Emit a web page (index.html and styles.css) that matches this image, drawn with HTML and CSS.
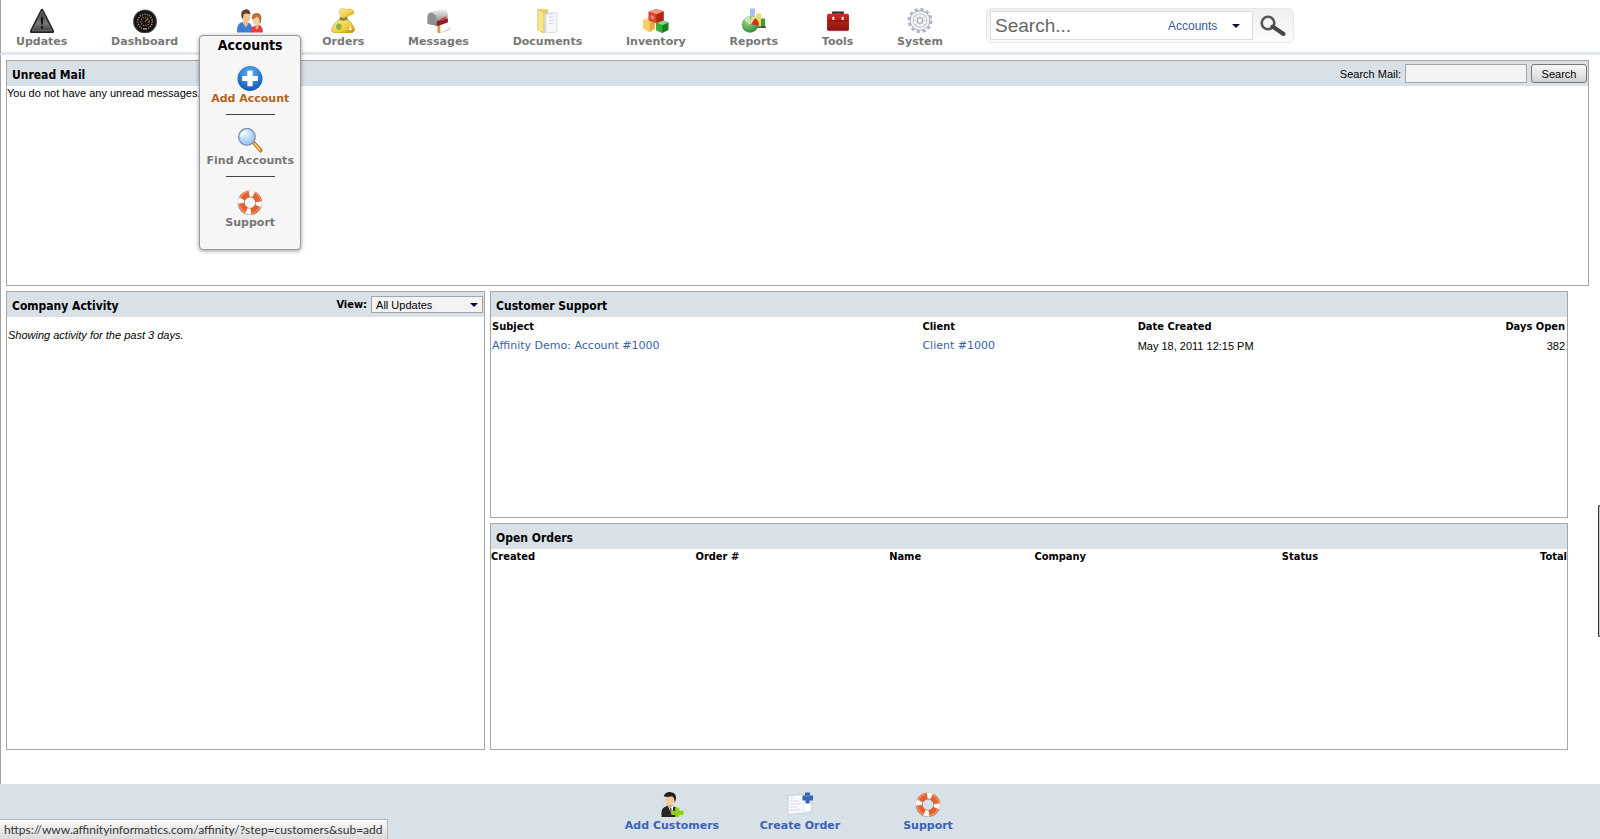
FILE: index.html
```html
<!DOCTYPE html>
<html lang="en">
<head>
    <meta charset="UTF-8">
    <meta name="viewport" content="width=device-width, initial-scale=1.0">
    <title>Affinity - Dashboard</title>
    <link rel="stylesheet" href="styles.css">
</head>
<body>
    <!-- shared icon parts -->
    <svg class="defs" width="0" height="0" aria-hidden="true">
        <defs>
            <linearGradient id="g-dark" x1="0" y1="0" x2="0" y2="1"><stop offset="0" stop-color="#333"/><stop offset=".6" stop-color="#777"/><stop offset="1" stop-color="#444"/></linearGradient>
            <linearGradient id="g-gold" x1="0" y1="0" x2="1" y2="1"><stop offset="0" stop-color="#fbeeb0"/><stop offset=".6" stop-color="#f0cf3c"/><stop offset="1" stop-color="#b98a14"/></linearGradient>
            <linearGradient id="g-steel" x1="0" y1="0" x2="0" y2="1"><stop offset="0" stop-color="#f4f4f4"/><stop offset="1" stop-color="#6c6e72"/></linearGradient>
            <radialGradient id="g-blue" cx=".5" cy=".3" r=".7"><stop offset="0" stop-color="#5fb4f6"/><stop offset="1" stop-color="#1056b4"/></radialGradient>
            <radialGradient id="g-green" cx=".4" cy=".3" r=".8"><stop offset="0" stop-color="#a5dc98"/><stop offset="1" stop-color="#27812c"/></radialGradient>
            <radialGradient id="g-glass" cx=".4" cy=".3" r=".8"><stop offset="0" stop-color="#e8f5ff"/><stop offset="1" stop-color="#86bdf2"/></radialGradient>
            <linearGradient id="g-red" x1="0" y1="0" x2="0" y2="1"><stop offset="0" stop-color="#cf2b22"/><stop offset="1" stop-color="#8d0f0f"/></linearGradient>
        </defs>
        <symbol id="i-support" viewBox="0 0 24 24">
            <circle cx="12" cy="12.5" r="8.5" fill="none" stroke="#8c8c8c" stroke-width="6.6" opacity=".6"/>
            <circle cx="12" cy="12" r="8.5" fill="none" stroke="#e8602c" stroke-width="6"/>
            <circle cx="12" cy="12" r="8.5" fill="none" stroke="#fff" stroke-width="6" stroke-dasharray="4.4 8.95" stroke-dashoffset="1"/>
            <circle cx="12" cy="12" r="10.5" fill="none" stroke="#fff" stroke-width="1" opacity=".35"/>
            <circle cx="12" cy="12" r="5.6" fill="none" stroke="#a34a2c" stroke-width=".6" opacity=".7"/>
        </symbol>
    </svg>

    <header class="topbar">
        <nav class="nav">
            <a href="#">
                <svg viewBox="0 0 24 24"><path d="M12 .8Q12.900.8 13.4 1.8L23.4 21.5Q24 24 22 24H2Q0 24 .6 21.5L10.6 1.8Q11.100.8 12 .8Z" fill="#222"/><path d="M12 3L21.500 22H2.500Z" fill="url(#g-dark)" stroke="#888" stroke-width=".6"/><path d="M10.800 9h2.400l-.5 7h-1.400zM11 17.500h2v2.200h-2z" fill="#111"/></svg>
                <span>Updates</span>
            </a>
            <a href="#">
                <svg viewBox="0 0 24 24"><circle cx="12" cy="13" r="11.5" fill="#555"/><circle cx="12" cy="13" r="10.6" fill="#151515"/><circle cx="12" cy="13" r="7" fill="none" stroke="#a8977c" stroke-width="1.6" stroke-dasharray="1 1.3"/><circle cx="12" cy="13" r="4" fill="none" stroke="#93602f" stroke-width="1.4" stroke-dasharray="1.3 1"/><path d="M12 13l3-3" stroke="#b5653a"/><path d="M9.500 18h5v2.500h-5z" fill="#000"/><path d="M10 20h4" stroke="#ccc"/></svg>
                <span>Dashboard</span>
            </a>
            <div class="nav-group">
                <a href="#">
                    <svg viewBox="0 0 26 24"><path d="M0 24Q0 15 4 14L8 13 13 15Q16 18 15 24Z" fill="#3a7fd8"/><path d="M14 24Q13 19 16 18L21 16Q26 17 26 24Z" fill="#e3403c"/><path d="M6 13h5v3l-2 3-3-4z" fill="#eab98a"/><ellipse cx="9" cy="8.5" rx="4.2" ry="5.5" fill="#efc499"/><path d="M4.500 9Q3 2 8 1Q13 0 13.500 6Q9 4 6.500 6L6 10Z" fill="#5d4027"/><path d="M18 16h4l-1 4-2 1z" fill="#eab98a"/><ellipse cx="19.5" cy="11.5" rx="3.9" ry="5" fill="#f3cda4"/><path d="M15 11Q14 5 19 4.500Q24.500 4 24.500 10Q24.500 14 22.500 16Q23 10 20 8Q18 10 15 11Z" fill="#b5773a"/></svg>
                    <span>Accounts</span>
                </a>
                <div class="menu">
                    <h2>Accounts</h2>
                    <a href="#" class="active">
                        <svg viewBox="0 0 24 24"><circle cx="12" cy="12" r="12" fill="url(#g-blue)"/><path d="M9.500 4.500h5v5h5v5h-5v5h-5v-5h-5v-5h5z" fill="#fff"/></svg>
                        <span>Add Account</span>
                    </a>
                    <hr>
                    <a href="#">
                        <svg viewBox="0 0 24 24"><path d="M14.500 15l2-2 7 7.500q.5 2-1.500 3z" fill="#e99a2c" stroke="#a2601c" stroke-width=".8"/><path d="M16.500 15l5 6" stroke="#ffdf8c"/><circle cx="9" cy="8.5" r="8" fill="url(#g-glass)" stroke="#8295ae" stroke-width="1.3"/><path d="M3.500 9Q4 3.500 9.500 3" fill="none" stroke="#fff" stroke-width="1.3"/></svg>
                        <span>Find Accounts</span>
                    </a>
                    <hr>
                    <a href="#">
                        <svg><use href="#i-support"/></svg>
                        <span>Support</span>
                    </a>
                </div>
            </div>
            <a href="#">
                <svg viewBox="0 0 24 24"><path d="M9.500 7Q7 3 9.500 1Q13-.5 15 1.500Q19-.5 22 2.500Q24 6 19 7L15 9H10Z" fill="url(#g-gold)" stroke="#d9c069" stroke-width=".6"/><path d="M9 11Q2 15 1 22Q2 24 6 24H19Q24 23 23 20Q20 13 16 10.500Z" fill="url(#g-gold)" stroke="#c09a2c" stroke-width=".7"/><path d="M9 8.500q3 2 7 0l.5 2.500q-4 2-8 .5z" fill="#8a8632"/><ellipse cx="8" cy="18" rx="2.7" ry="3.2" fill="#8fb544"/><path d="M19 16l1.500 5h-3z" fill="#fff5bf"/></svg>
                <span>Orders</span>
            </a>
            <a href="#">
                <svg viewBox="0 0 24 24"><path d="M12 24L23 18.500V21L14 24Z" fill="#ddd"/><path d="M10.500 14h2.800v10h-2.800z" fill="#d99b52"/><path d="M1 8Q1 4 5 3L16 1Q20.500 1 20.500 6V12L10 17 1 15Z" fill="url(#g-steel)"/><path d="M1 8Q2 4 5 4.500Q9 5.500 9.500 10V17L1 15Z" fill="#8d8f93"/><path d="M10 12.500l10.500-2.500v4L10 17.500z" fill="#8d2129"/><path d="M13 10.500l6-2.500v2l-5 2.500z" fill="#d5424a"/></svg>
                <span>Messages</span>
            </a>
            <a href="#">
                <svg viewBox="0 0 24 24"><path d="M4 1H13V22L8 24 4 21Z" fill="#e5d36a"/><path d="M9 5L19 5V23H9Z" fill="#e4e6ea" stroke="#bbb" stroke-width=".5"/><path d="M11 6L21.500 4.500V23L11 24Z" fill="#f7f8fa" stroke="#c7cacf" stroke-width=".6"/><path d="M14 9l4-.5M14 12l5-.5M14 15l4-.5" stroke="#d3d8e2"/><path d="M3 1L9 4.500V24L3 21Z" fill="#f4e88c" stroke="#d3bb49" stroke-width=".6"/></svg>
                <span>Documents</span>
            </a>
            <a href="#">
                <svg viewBox="0 0 24 24"><path d="M0 11l5-2 6 2v9l-5 3-6-3z" fill="#e6b12f"/><path d="M0 11l5-2 6 2-5 2z" fill="#fbe9a7"/><path d="M0 11l6 2v10l-6-3z" fill="#f5d069"/><path d="M12 14l6-2.500 6 2.500v7l-6 3-6-3z" fill="#17801d"/><path d="M12 14l6-2.500 6 2.500-6 2.500z" fill="#84d884"/><path d="M12 14l6 2.500V24l-6-3z" fill="#35b23c"/><path d="M5 3.500L12 1l7.500 2v9L12 14.500 5 12z" fill="#b52315"/><path d="M5 3.500L12 1l7.500 2-7 3z" fill="#f39a85"/><path d="M5 3.500L12.500 6v8.500L5 12z" fill="#dc4730"/><path d="M7 7l3 1v3l-3-1z" fill="#ee8b76"/></svg>
                <span>Inventory</span>
            </a>
            <a href="#">
                <svg viewBox="0 0 26 24"><path d="M9 0h5v16H9z" fill="#a7bfea"/><path d="M15 5h5v14h-5z" fill="#eadb63"/><path d="M20 10h4v9h-4z" fill="#419a35"/><path d="M8 18h17v1.300H8z" fill="#333"/><circle cx="9" cy="16" r="8.2" fill="url(#g-green)"/><path d="M9 16V8Q5 8 3 11Z" fill="#c7e7be"/><path d="M9 16L10.500 8Q14 8 16.500 12Z" fill="#f3e374"/><path d="M10 16L14 9.500Q18 12 18 17Z" fill="#d4302b"/></svg>
                <span>Reports</span>
            </a>
            <a href="#">
                <svg viewBox="0 0 24 24"><path d="M7.500 6.500V4.500h9v2" fill="none" stroke="#2a2a2a" stroke-width="2.2"/><rect x="1.5" y="5.5" width="21" height="16.5" rx="1.5" fill="url(#g-red)"/><path d="M1.500 12.500h21" stroke="#6b0b0b" stroke-width=".6"/><path d="M6.500 8.500h2v3h-2zM15.500 8.500h2v3h-2z" fill="#f3e7e7"/><path d="M3 22h18" stroke="#bbb" opacity=".6"/></svg>
                <span>Tools</span>
            </a>
            <a href="#">
                <svg viewBox="0 0 24 24"><circle cx="12" cy="12" r="10.8" fill="none" stroke="#aeb6c2" stroke-width="2.4" stroke-dasharray="3.2 2.455"/><circle cx="12" cy="12" r="9.5" fill="#f3f5f8" stroke="#a9b1bd"/><circle cx="12" cy="12" r="6.5" fill="#fff" stroke="#bcc3ce"/><path d="M12 5.500v13M5.500 12h13M7.500 7.500l9 9M16.500 7.500l-9 9" stroke="#ccd2da"/><circle cx="12" cy="12" r="2.7" fill="#f6f7f9" stroke="#98a1ae"/></svg>
                <span>System</span>
            </a>
        </nav>
        <form class="search">
            <div class="search-box">
                <input type="text" placeholder="Search..." aria-label="Search">
                <div class="select-wrap">
                    <select aria-label="Search in">
                        <option>Accounts</option>
                        <option>Orders</option>
                        <option>Messages</option>
                    </select>
                </div>
            </div>
            <button type="button" aria-label="Search">
                <svg viewBox="0 0 26 22"><circle cx="8" cy="8" r="6.3" fill="none" stroke="#555" stroke-width="2.6"/><path d="M12.500 11.500L23.500 19" stroke="#484848" stroke-width="4" stroke-linecap="round"/></svg>
            </button>
        </form>
    </header>

    <main>
        <section class="panel">
            <div class="panel-head">
                <h2>Unread Mail</h2>
                <form class="mail-search">
                    <label for="mail">Search Mail:</label>
                    <input type="text" id="mail">
                    <button type="button">Search</button>
                </form>
            </div>
            <p>You do not have any unread messages.</p>
        </section>
        <div class="columns">
            <section class="panel">
                <div class="panel-head">
                    <h2>Company Activity</h2>
                    <div class="view">
                        <label for="view">View:</label>
                        <div class="select-wrap">
                            <select id="view">
                                <option>All Updates</option>
                            </select>
                        </div>
                    </div>
                </div>
                <p class="note">Showing activity for the past 3 days.</p>
            </section>
            <div class="stack">
                <section class="panel">
                    <div class="panel-head"><h2>Customer Support</h2></div>
                    <table class="support">
                        <thead>
                            <tr><th>Subject</th><th>Client</th><th>Date Created</th><th class="right">Days Open</th></tr>
                        </thead>
                        <tbody>
                            <tr>
                                <td><a href="#">Affinity Demo: Account #1000</a></td>
                                <td><a href="#">Client #1000</a></td>
                                <td>May 18, 2011 12:15 PM</td>
                                <td class="right">382</td>
                            </tr>
                        </tbody>
                    </table>
                </section>
                <section class="panel">
                    <div class="panel-head"><h2>Open Orders</h2></div>
                    <table class="orders">
                        <colgroup><col class="c-created"><col class="c-order"><col class="c-name"><col class="c-company"><col><col></colgroup>
                        <thead>
                            <tr><th>Created</th><th>Order #</th><th>Name</th><th>Company</th><th>Status</th><th class="right">Total</th></tr>
                        </thead>
                    </table>
                </section>
            </div>
        </div>
    </main>

    <footer>
        <a href="#">
            <svg viewBox="0 0 24 24"><path d="M2 24Q1 16 5 14.500L9 12.500 15 14.500Q19 17 18 24Z" fill="#262626"/><path d="M7.500 12l6 1-1.500 9z" fill="#f5f5f5"/><path d="M10 15l1.500.500L12 22l-1.500-1z" fill="#555"/><path d="M6.500 9h6v4l-2.500 3-3-3z" fill="#d9a57a"/><ellipse cx="9.8" cy="7" rx="4.5" ry="6" fill="#f0c8a0"/><path d="M4 4Q6-.5 11 .2Q17 1 15.500 8L14.500 10Q14.500 5 12 4Q8 5 4 4Z" fill="#231d1a"/><path d="M15 15h4v3h4v4h-4v2h-4v-2h-3.500v-4H15z" fill="#8fd01c"/></svg>
            <span>Add Customers</span>
        </a>
        <a href="#">
            <svg viewBox="0 0 26 24"><path d="M1 3L15 2 24 9V20L1 22Z" fill="#f7f8fb" stroke="#c2c7d0" stroke-width=".8"/><path d="M3 5.500h3M3 8.500h9M3 11.500h11M3 14.500h8M3 17.500h10" stroke="#d8dde5"/><path d="M17 10h7v9l-7 .5z" fill="#fff" stroke="#d0d4da" stroke-width=".5"/><path d="M18 0h5v3h3v5h-3.500v3h-4V8H15.500V3H18z" fill="#3566b1"/><path d="M18 3.500h5" stroke="#739bd8"/></svg>
            <span>Create Order</span>
        </a>
        <a href="#">
            <svg><use href="#i-support"/></svg>
            <span>Support</span>
        </a>
    </footer>

    <div class="side-tab"></div>
    <div class="status">https://www.affinityinformatics.com/affinity/?step=customers&amp;sub=add</div>
</body>
</html>
```

FILE: styles.css
```css
*{
    box-sizing: border-box;
    margin: 0;
    padding: 0;
}
body{
    display: flex;
    flex-direction: column;
    min-height: 100vh;
    background: #fff;
    color: #000;
    font-family: "Liberation Sans", Arial, sans-serif;
    font-size: 11px;
    line-height: 14px;
}
a{
    color: #3a62a8;
    text-decoration: none;
}
input, select, button{
    font-family: inherit;
    font-size: 11px;
}
.defs{
    position: absolute;
}

/* top bar */
.topbar{
    display: flex;
    align-items: flex-start;
    gap: 43px;
    height: 55px;
    padding: 8px 15px 0;
    border-left: 1px solid #a0a0a0;
    border-bottom: 3px solid #dfe6ec;
}
.nav{
    display: flex;
    flex: 0 1 927px;
    justify-content: space-between;
}
.nav a, footer a{
    display: flex;
    flex-direction: column;
    align-items: center;
    color: #777;
    font: bold 11px/14px "DejaVu Sans", Verdana, sans-serif;
    white-space: nowrap;
}
.nav svg, footer svg{
    width: 26px;
    height: 25px;
    margin-bottom: 2px;
}
.nav-group{
    position: relative;
}
/* the open menu carries the label itself */
.nav-group > a span{
    visibility: hidden;
}
.menu{
    position: absolute;
    top: 27px;
    left: 50%;
    z-index: 10;
    width: 102px;
    height: 215px;
    margin-left: -51px;
    border: 1px solid #999;
    border-radius: 4px;
    background: #f6f6f6;
    box-shadow: 0 1px 4px rgba(0,0,0,0.4);
    text-align: center;
}
.menu h2{
    margin-bottom: 12px;
    font: bold 14px/18px "DejaVu Sans Condensed", "DejaVu Sans", Tahoma, sans-serif;
}
.menu svg{
    margin-bottom: 1px;
}
.menu a.active{
    color: #b8621b;
}
.menu hr{
    width: 49px;
    margin: 8px auto 13px;
    border: 0;
    border-top: 1px solid #444;
}
.search{
    display: flex;
    flex: none;
    align-items: center;
    width: 308px;
    height: 35px;
    padding-left: 3px;
    border: 1px solid #e8e8e8;
    border-radius: 5px;
    background: linear-gradient(#efefef, #fbfbfb);
}
.search-box{
    display: flex;
    flex: 1;
    min-width: 0;
    height: 29px;
    border: 1px solid #ddd;
    background: #fff;
}
.search-box input{
    flex: 1;
    min-width: 0;
    padding-left: 4px;
    border: 0;
    outline: 0;
    background: none;
    font-size: 19px;
}
.search-box input::placeholder{
    color: #666;
}
.search button{
    width: 40px;
    height: 30px;
    border: 0;
    background: none;
}
.search button svg{
    display: block;
    width: 26px;
    height: 22px;
    margin: 0 auto;
}
.select-wrap{
    position: relative;
    display: flex;
}
.select-wrap::after{
    content: "";
    position: absolute;
    top: 50%;
    right: 5px;
    margin-top: -2px;
    border: 4px solid transparent;
    border-top-color: #0a0a3c;
    border-bottom: 0;
    pointer-events: none;
}
.select-wrap select{
    appearance: none;
    border-radius: 0;
}
.search .select-wrap::after{
    right: 12px;
}
.search select{
    width: 84px;
    border: 0;
    background: none;
    color: #3a5a98;
    font-size: 12px;
}

/* panels */
main{
    flex: 1;
    display: flex;
    flex-direction: column;
    gap: 5px;
    padding: 5px 11px 34px 5px;
    border-left: 1px solid #a0a0a0;
}
.panel{
    min-height: 226px;
    border: 1px solid #a5a5a5;
}
.panel-head{
    display: flex;
    align-items: center;
    justify-content: space-between;
    height: 25px;
    padding: 0 1px 0 5px;
    background: #d9e1e8;
}
.panel-head h2{
    padding-top: 2px;
    font: bold 12px/16px "DejaVu Sans Condensed", "DejaVu Sans", Tahoma, sans-serif;
}
.mail-search, .view{
    display: flex;
    align-items: center;
    gap: 4px;
}
.mail-search input{
    width: 122px;
    height: 19px;
    border: 1px solid #a5a5a5;
    background: #f3f3f3;
}
.mail-search button{
    width: 56px;
    height: 19px;
    border: 1px solid #777;
    border-radius: 3px;
    background: linear-gradient(#f6f6f6, #e8e8e8 50%, #cfcfcf);
}
.view label, th{
    font: bold 11px/14px "DejaVu Sans Condensed", "DejaVu Sans", Tahoma, sans-serif;
}
.view select{
    width: 112px;
    height: 17px;
    padding-left: 4px;
    border: 1px solid #a5a5a5;
    background: #f3f3f3;
}
.note{
    padding: 11px 1px;
    font-style: italic;
}
.columns{
    display: grid;
    grid-template-columns: 4fr 9fr;
    gap: 5px;
    padding-right: 21px;
}
.stack{
    display: flex;
    flex-direction: column;
    gap: 5px;
}
.stack .panel{
    min-height: 227px;
}
table{
    width: 100%;
    table-layout: fixed;
    border-collapse: collapse;
}
th{
    padding-top: 1px;
    text-align: left;
}
.right{
    text-align: right;
}
.support th, .support td{
    width: 20%;
    padding: 3px 2px 1px 1px;
}
.support th:first-child{
    width: 40%;
}
.support a{
    font-family: "DejaVu Sans", Verdana, sans-serif;
}
.c-created{ width: 19%; }
.c-order{ width: 18%; }
.c-name{ width: 13.5%; }
.c-company{ width: 23%; }

/* bottom bar */
footer{
    display: flex;
    justify-content: center;
    height: 55px;
    padding-top: 8px;
    background: #d9e1e8;
}
footer a{
    width: 128px;
    color: #3a62b8;
}
.status{
    position: fixed;
    left: 0;
    bottom: 0;
    height: 20px;
    padding: 0 4px;
    border: 1px solid #b5b5b5;
    border-width: 1px 1px 0 0;
    background: linear-gradient(#fafafa, #dcdcdc);
    color: #333;
    font: 12px/20px Lato, "Segoe UI", sans-serif;
}
.side-tab{
    position: fixed;
    top: 505px;
    right: 0;
    width: 2px;
    height: 132px;
    border: 1px solid #2b3440;
    border-right: 0;
    border-radius: 3px 0 0 3px;
    background: #c5ccd4;
}
```
